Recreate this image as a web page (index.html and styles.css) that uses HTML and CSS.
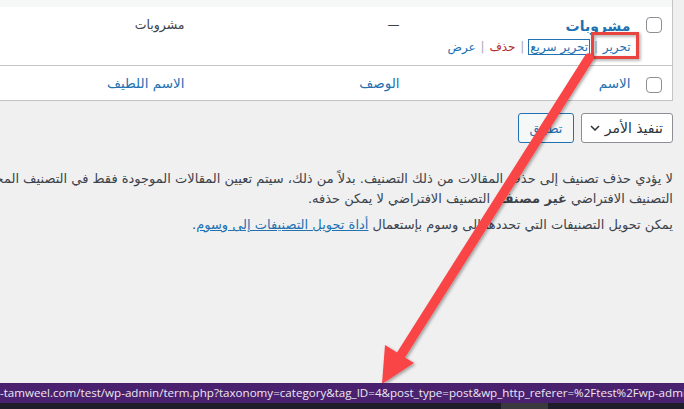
FILE: index.html
```html
<!DOCTYPE html>
<html lang="ar" dir="rtl">
<head>
    <meta charset="UTF-8">
    <meta name="viewport" content="width=device-width, initial-scale=1.0">
    <title>التصنيفات</title>
    <link rel="stylesheet" href="styles.css">
</head>
<body>
    <div class="wrap">
        <!-- Categories table -->
        <table class="terms-table">
            <tr class="row-alt">
                <td colspan="5"></td>
            </tr>
            <tr class="term-row">
                <th class="check-col"><span class="checkbox"></span></th>
                <td class="col-name">
                    <a class="row-title" href="#">مشروبات</a>
                    <div class="row-actions">
                        <a href="#">تحرير</a>
                        <span class="sep">|</span>
                        <a href="#" class="focused">تحرير سريع</a>
                        <span class="sep">|</span>
                        <a href="#" class="delete">حذف</a>
                        <span class="sep">|</span>
                        <a href="#">عرض</a>
                    </div>
                </td>
                <td class="col-desc">—</td>
                <td class="col-slug">مشروبات</td>
                <td class="col-count"></td>
            </tr>
            <tr class="foot-row">
                <th class="check-col"><span class="checkbox"></span></th>
                <td class="col-name"><a href="#">الاسم</a></td>
                <td class="col-desc"><a href="#">الوصف</a></td>
                <td class="col-slug"><a href="#">الاسم اللطيف</a></td>
                <td class="col-count"></td>
            </tr>
        </table>

        <!-- Bulk actions -->
        <div class="tablenav">
            <div class="bulk-select">
                <span>تنفيذ الأمر</span>
                <svg width="10" height="6" viewBox="0 0 10 6"><path d="M1 1l4 4 4-4" fill="none" stroke="#2c3338" stroke-width="1.5"/></svg>
            </div>
            <button class="apply-btn">تطبيق</button>
        </div>

        <div class="form-notes">
            <p>لا يؤدي حذف تصنيف إلى حذف المقالات من ذلك التصنيف. بدلاً من ذلك، سيتم تعيين المقالات الموجودة فقط في التصنيف المحذوف إلى<br>التصنيف الافتراضي <strong>غير مصنف</strong>. التصنيف الافتراضي لا يمكن حذفه.</p>
            <p>يمكن تحويل التصنيفات التي تحددها إلى وسوم بإستعمال <a href="#">أداة تحويل التصنيفات إلى وسوم</a>.</p>
        </div>
    </div>

    <!-- Annotation drawn over the screenshot -->
    <svg class="annotation" width="684" height="409" viewBox="0 0 684 409">
        <defs>
            <filter id="shadow" x="-20%" y="-20%" width="140%" height="140%">
                <feDropShadow dx="1.5" dy="1.5" stdDeviation="1.5" flood-color="#000" flood-opacity="0.35"/>
            </filter>
        </defs>
        <rect x="592.5" y="33.5" width="45" height="24" fill="none" stroke="#e8443f" stroke-width="3" filter="url(#shadow)"/>
        <g filter="url(#shadow)" fill="#fa4447">
            <line x1="589" y1="58" x2="401" y2="355" stroke="#fa4447" stroke-width="9.5" stroke-linecap="round"/>
            <polygon points="382,384 385,345 414,363"/>
        </g>
    </svg>

    <!-- Browser link preview -->
    <div class="statusbar">
        <div class="status-url">-tamweel.com/test/wp-admin/term.php?taxonomy=category&amp;tag_ID=4&amp;post_type=post&amp;wp_http_referer=%2Ftest%2Fwp-admin%2Fedit-tags.php</div>
        <div class="taskbar"><span class="task-item"></span></div>
    </div>
</body>
</html>
```

FILE: styles.css
```css
* {
    margin: 0;
    padding: 0;
    box-sizing: border-box;
}
html, body {
    height: 409px;
    overflow: hidden;
}
body {
    background-color: #f0f0f1;
    font-family: 'DejaVu Sans', Tahoma, sans-serif;
    font-size: 12px;
    color: #3c434a;
    position: relative;
}
a {
    color: #2271b1;
    text-decoration: none;
}
.wrap {
    width: 900px;
    margin-right: 11px;
}
.terms-table {
    width: 100%;
    border-collapse: collapse;
    background-color: #fff;
    border: 1px solid #c3c4c7;
    border-top: none;
}
.terms-table td, .terms-table th {
    text-align: right;
    vertical-align: top;
    font-weight: normal;
}
.row-alt td {
    height: 7px;
    background-color: #f6f7f7;
}
.check-col {
    width: 32px;
    padding: 10px 10px 0 0;
}
.checkbox {
    display: block;
    width: 16px;
    height: 16px;
    border: 1px solid #8c8f94;
    border-radius: 4px;
    background-color: #fff;
}
.col-name {
    width: 231px;
    padding: 8px 10px;
}
.col-desc, .col-slug {
    width: 215px;
    padding: 8px 10px;
    line-height: 20px;
}
.col-slug {
    font-size: 12.5px;
}
.col-count {
    padding: 8px 10px;
}
.term-row td {
    height: 58px;
}
.row-title {
    display: block;
    font-size: 14px;
    font-weight: bold;
    line-height: 22px;
}
.row-actions {
    line-height: 20px;
    white-space: nowrap;
}
.row-actions .sep {
    color: #a7aaad;
    margin: 0 1px;
}
.row-actions .focused {
    outline: 1.5px solid #2271b1;
    outline-offset: 0;
    padding: 0 1px;
}
.row-actions .delete {
    color: #b32d2e;
}
.foot-row td, .foot-row th {
    border-top: 1px solid #c3c4c7;
}
.foot-row td {
    font-size: 13.5px;
    line-height: 18px;
    padding: 8px 10px 8px;
}
.foot-row .check-col {
    padding-top: 11px;
}
.tablenav {
    display: flex;
    gap: 7px;
    margin-top: 12px;
    height: 30px;
}
.bulk-select {
    width: 92px;
    height: 30px;
    background-color: #fff;
    border: 1px solid #8c8f94;
    border-radius: 3px;
    display: flex;
    align-items: center;
    justify-content: space-between;
    padding: 0 9px 0 8px;
    font-size: 14px;
    color: #2c3338;
}
.apply-btn {
    width: 56px;
    height: 30px;
    background-color: #f6f7f7;
    border: 1px solid #2271b1;
    border-radius: 3px;
    color: #2271b1;
    font-family: inherit;
    font-size: 13px;
}
.form-notes {
    margin-top: 26px;
    font-size: 13px;
}
.form-notes p {
    line-height: 20px;
    margin-bottom: 6px;
    white-space: nowrap;
}
.form-notes a {
    text-decoration: underline;
}
.annotation {
    position: absolute;
    top: 0;
    left: 0;
    pointer-events: none;
}
.statusbar {
    position: absolute;
    left: 0;
    bottom: 0;
    width: 100%;
    direction: ltr;
}
.status-url {
    height: 20px;
    background-color: #4a216e;
    color: #ece8f1;
    font-family: 'Open Sans', 'Noto Sans', sans-serif;
    font-size: 11.6px;
    line-height: 20px;
    white-space: nowrap;
    overflow: hidden;
}
.taskbar {
    height: 6px;
    background-color: #1d1d29;
    position: relative;
}
.task-item {
    position: absolute;
    left: 501px;
    width: 47px;
    height: 6px;
    background-color: #3a3a3e;
}
```
